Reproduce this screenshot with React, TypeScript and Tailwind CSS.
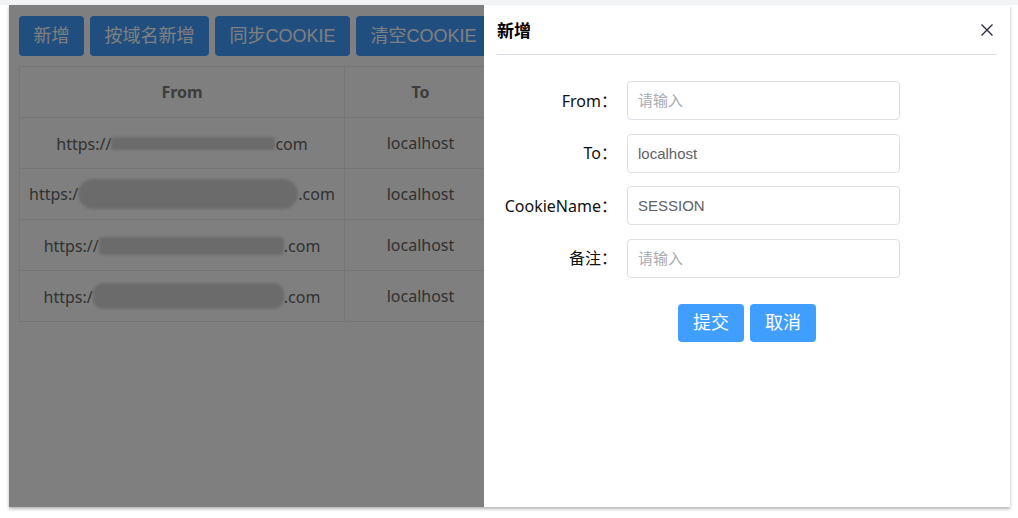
import { useState } from "react";

const cjk = "font-['Noto_Sans','Noto_Sans_CJK_SC',sans-serif]";
const arial = "font-['Liberation_Sans','Noto_Sans_CJK_SC',sans-serif]";

interface Rule {
  pre: string;
  blur: number;
  h: number;
  post: string;
  round: string;
}

const RULES: Rule[] = [
  { pre: "https://", blur: 164, h: 13, post: "com", round: "rounded-[2px]" },
  { pre: "https:/", blur: 220, h: 30, post: ".com", round: "rounded-full" },
  { pre: "https://", blur: 185, h: 18, post: ".com", round: "rounded-[3px]" },
  { pre: "https:/", blur: 191, h: 26, post: ".com", round: "rounded-[10px]" },
];

const TOP_BUTTONS = ["新增", "按域名新增", "同步COOKIE", "清空COOKIE"];

function FormRow({
  label,
  value,
  placeholder,
}: {
  label: string;
  value?: string;
  placeholder?: string;
}) {
  const [text, setText] = useState(value ?? "");
  return (
    <div className="flex items-center h-[39px]">
      <label className={`w-[120px] text-right text-[16px] text-[#111] ${cjk}`}>{label}：</label>
      <input
        value={text}
        onChange={(e) => setText(e.target.value)}
        placeholder={placeholder}
        className={`ml-[10px] w-[273px] h-[39px] border border-[#dcdfe6] rounded-[4px] px-[10px] text-[15px] text-[#606266] placeholder:text-[#a8abb2] outline-none ${arial}`}
      />
    </div>
  );
}

export default function App() {
  return (
    <div className="w-full h-[518px] bg-white overflow-hidden">
      <div className="h-[5px] bg-[#f1f3f4]" />
      <div className="relative ml-[9px] w-[1001px] h-[502px] bg-white overflow-hidden shadow-[0_2px_3px_rgba(0,0,0,0.3)]">
        {/* page behind the drawer */}
        <div className="pt-[11px] px-[10px]">
          <div className="flex gap-[6px]">
            {TOP_BUTTONS.map((b) => (
              <button
                key={b}
                className={`h-[40px] px-[14.5px] rounded-[4px] bg-[#409eff] text-white text-[18px] whitespace-nowrap ${arial}`}
              >
                {b}
              </button>
            ))}
          </div>

          <table className={`mt-[10px] w-[980px] table-fixed border-collapse text-[16px] ${cjk}`}>
            <colgroup>
              <col className="w-[325px]" />
              <col className="w-[152px]" />
              <col />
            </colgroup>
            <thead>
              <tr className="h-[51px]">
                <th className="border border-[#ececec] font-bold text-[#7a7a7a]">From</th>
                <th className="border border-[#ececec] font-bold text-[#7a7a7a]">To</th>
                <th className="border border-[#ececec] font-bold text-[#7a7a7a]">CookieName</th>
              </tr>
            </thead>
            <tbody>
              {RULES.map((r, i) => (
                <tr key={i} className="h-[51px]">
                  <td className="border border-[#ececec] text-center text-[#646464] whitespace-nowrap">
                    <span className="align-middle">{r.pre}</span>
                    <span
                      className={`inline-block align-middle bg-[#d6d6d6] blur-[1.5px] ${r.round}`}
                      style={{ width: r.blur, height: r.h }}
                    />
                    <span className="align-middle">{r.post}</span>
                  </td>
                  <td className="border border-[#ececec] text-center text-[#646464]">localhost</td>
                  <td className="border border-[#ececec] text-center text-[#646464]">SESSION</td>
                </tr>
              ))}
            </tbody>
          </table>
        </div>

        {/* mask */}
        <div className="absolute inset-0 bg-black/50" />

        {/* drawer */}
        <div className="absolute top-0 right-0 h-full w-[526px] bg-white">
          <div className="mx-[13px] h-[50px] pt-[3px] flex items-center justify-between border-b border-[#dcdfe6]">
            <span className={`text-[17px] font-bold text-black ${cjk}`}>新增</span>
            <svg width="12" height="12" viewBox="0 0 12 12" className="mr-[4px] -mt-[2px]">
              <path d="M0.5 0.5 L11.5 11.5 M11.5 0.5 L0.5 11.5" stroke="#2a2540" strokeWidth="1.3" fill="none" />
            </svg>
          </div>

          <div className="pl-[13px] mt-[26px] flex flex-col gap-[13.5px]">
            <FormRow label="From" placeholder="请输入" />
            <FormRow label="To" value="localhost" />
            <FormRow label="CookieName" value="SESSION" />
            <FormRow label="备注" placeholder="请输入" />
          </div>

          <div className="mt-[26.5px] flex justify-center gap-[6px]">
            <button className={`w-[66px] h-[38px] rounded-[4px] bg-[#409eff] text-white text-[18px] ${arial}`}>提交</button>
            <button className={`w-[66px] h-[38px] rounded-[4px] bg-[#409eff] text-white text-[18px] ${arial}`}>取消</button>
          </div>
        </div>
      </div>
    </div>
  );
}
